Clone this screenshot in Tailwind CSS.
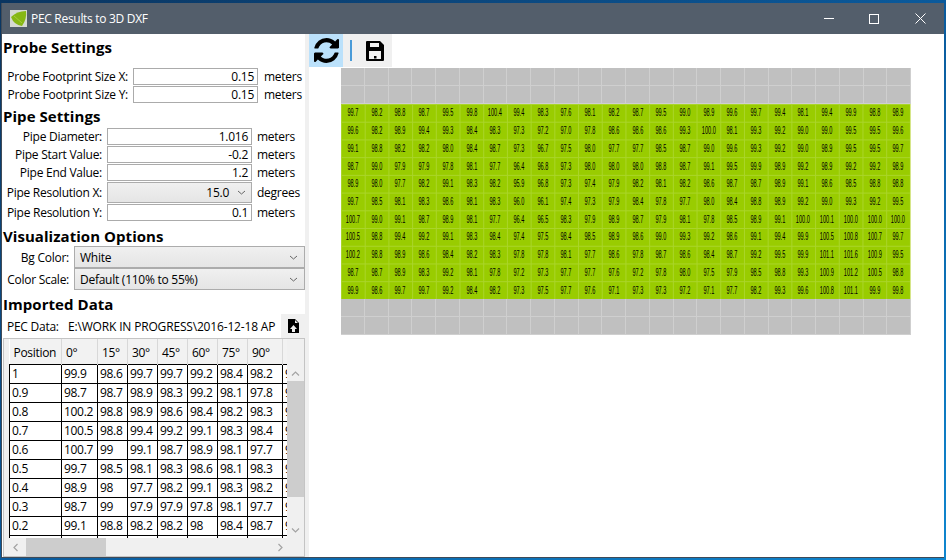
<!DOCTYPE html>
<html>
<head>
<meta charset="utf-8">
<title>PEC Results to 3D DXF</title>
<script src="https://cdn.jsdelivr.net/npm/@tailwindcss/browser@4"></script>
</head>
<body class="w-[946px] h-[560px] overflow-hidden bg-gradient-to-br from-[#0a3560] via-[#0a5a9c] to-[#0f86cf] font-['Open_Sans','Noto_Sans',sans-serif] text-[12px] text-black">
<div class="ml-[1px] mt-[3px] w-[943px] h-[555px] border-l border-b border-[#3f4a57] flex flex-col bg-white">
  <div class="h-[31px] shrink-0 bg-[#535e6b] flex items-center text-white">
    <svg class="ml-[8px] w-[17px] h-[17px]" viewBox="0 0 17 17"><rect width="17" height="17" fill="#d5d9d2"/><path d="M1 7 Q7 1 16 1 Q17 9 12 16 Q4 15 1 7Z" fill="#86b714"/><path d="M4 6 L12 13" stroke="#a5cf3a" stroke-width="1"/></svg>
    <span class="ml-[4px] tracking-[-0.3px]">PEC Results to 3D DXF</span>
    <div class="ml-auto flex items-center pr-px">
      <div class="w-[44px] h-[31px] flex items-center justify-center"><div class="w-[10px] h-px bg-white"></div></div>
      <div class="w-[46px] h-[31px] flex items-center justify-center"><div class="w-[10px] h-[10px] border border-white"></div></div>
      <div class="w-[46px] h-[31px] flex items-center justify-center"><svg class="w-[11px] h-[11px]" viewBox="0 0 11 11"><path d="M0.5 0.5 L10.5 10.5 M10.5 0.5 L0.5 10.5" stroke="#fff" stroke-width="1"/></svg></div>
    </div>
  </div>
  <div class="flex-1 flex min-h-0">
    <div class="w-[303px] shrink-0 flex flex-col tracking-[-0.26px]">
      <div class="h-[26px] pl-[1px] flex items-center font-bold text-[15px] tracking-[0.05px]">Probe Settings</div>
      <div class="mt-[8px] grid grid-cols-[131px_125px_1fr] auto-rows-[17px] gap-y-px items-center">
        <div class="text-right pr-[5px] pt-px">Probe Footprint Size X:</div>
        <div class="h-full border border-[#ababab] text-right pr-[3px] leading-[16px]">0.15</div>
        <div class="pl-[6px] pt-px">meters</div>
        <div class="text-right pr-[5px] pt-px">Probe Footprint Size Y:</div>
        <div class="h-full border border-[#ababab] text-right pr-[3px] leading-[16px]">0.15</div>
        <div class="pl-[6px] pt-px">meters</div>
      </div>
      <div class="h-[25px] pt-[2px] pl-[1px] flex items-center font-bold text-[15px] tracking-[0.05px]">Pipe Settings</div>
      <div class="grid grid-cols-[105px_145px_1fr] grid-rows-[17px_17px_17px_21px_17px] gap-y-px items-center">
        <div class="text-right pr-[5px] pt-px">Pipe Diameter:</div>
        <div class="h-full border border-[#ababab] text-right pr-[3px] leading-[16px]">1.016</div>
        <div class="pl-[5px] pt-px">meters</div>
        <div class="text-right pr-[5px] pt-px">Pipe Start Value:</div>
        <div class="h-full border border-[#ababab] text-right pr-[3px] leading-[16px]">-0.2</div>
        <div class="pl-[5px] pt-px">meters</div>
        <div class="text-right pr-[5px] pt-px">Pipe End Value:</div>
        <div class="h-full border border-[#ababab] text-right pr-[3px] leading-[16px]">1.2</div>
        <div class="pl-[5px] pt-px">meters</div>
        <div class="text-right pr-[5px] pt-px">Pipe Resolution X:</div>
        <div class="h-full border border-[#acacac] bg-gradient-to-b from-[#f0f0f0] to-[#e5e5e5] flex items-center justify-end pr-[5px]"><span>15.0</span>
          <svg class="ml-[8px] w-[9px] h-[5px]" viewBox="0 0 9 5"><path d="M1 1 L4.5 4 L8 1" fill="none" stroke="#666" stroke-width="1"/></svg>
        </div>
        <div class="pl-[5px] pt-px">degrees</div>
        <div class="text-right pr-[5px] pt-px">Pipe Resolution Y:</div>
        <div class="h-full border border-[#ababab] text-right pr-[3px] leading-[16px]">0.1</div>
        <div class="pl-[5px] pt-px">meters</div>
      </div>
      <div class="h-[25px] pt-[5px] pl-[1px] flex items-center font-bold text-[15px] tracking-[0.05px]">Visualization Options</div>
      <div class="grid grid-cols-[72px_1fr] grid-rows-[22px_22px] items-center">
        <div class="text-right pr-[5px] pt-px">Bg Color:</div>
        <div class="h-full border border-[#acacac] bg-gradient-to-b from-[#f0f0f0] to-[#e5e5e5] flex items-center justify-between pl-[5px] pr-[6px]"><span class="pt-px">White</span>
          <svg class="w-[9px] h-[5px]" viewBox="0 0 9 5"><path d="M1 1 L4.5 4 L8 1" fill="none" stroke="#666" stroke-width="1"/></svg>
        </div>
        <div class="text-right pr-[5px] pt-px">Color Scale:</div>
        <div class="h-full border border-[#acacac] bg-gradient-to-b from-[#f0f0f0] to-[#e5e5e5] flex items-center justify-between pl-[5px] pr-[6px]"><span class="pt-px">Default (110% to 55%)</span>
          <svg class="w-[9px] h-[5px]" viewBox="0 0 9 5"><path d="M1 1 L4.5 4 L8 1" fill="none" stroke="#666" stroke-width="1"/></svg>
        </div>
      </div>
      <div class="h-[24px] pt-[4px] pl-[1px] flex items-center font-bold text-[15px] tracking-[0.05px]">Imported Data</div>
      <div class="h-[24px] flex items-center pl-[5px]">
        <span class="w-[61px] shrink-0 pt-px">PEC Data:</span>
        <span class="w-[213px] overflow-hidden whitespace-nowrap shrink-0 pt-px tracking-[-0.17px]">E:\WORK IN PROGRESS\2016-12-18 AP</span>
        <div class="ml-auto w-[24px] h-[24px] bg-[#f0f0f0] flex items-center justify-center">
          <svg class="w-[11px] h-[14px]" viewBox="0 0 11 14"><path fill-rule="evenodd" d="M0 0 H7 L11 4 V14 H0 Z M7 1 V4 H10 Z M5.5 6 L2 10 H4 V13 H7 V10 H9 Z" fill="#000"/></svg>
        </div>
      </div>
      <div class="flex-1 min-h-0 ml-[1px] border border-[#c4c4c4] flex flex-col tracking-[-0.3px]">
        <div class="flex-1 min-h-0 flex">
          <div class="w-[5px] shrink-0 bg-[#f0f0f0]"></div>
          <div class="flex-1 min-w-0 overflow-hidden">
            <table class="table-fixed w-[308px] border-collapse [&_td]:border [&_td]:border-black [&_td]:h-[19px] [&_td]:p-0 [&_td]:pl-[2px] [&_td]:leading-[16px] [&_td]:whitespace-nowrap [&_td]:overflow-hidden [&_th]:h-[25px] [&_th]:pt-[3px] [&_th]:bg-[#f2f2f2] [&_th]:border-r [&_th]:border-[#d8d8d8] [&_th]:font-normal [&_th]:text-left [&_th]:pl-[4px]">
              <colgroup><col class="w-[52px]"><col class="w-[36px]"><col class="w-[30px]"><col class="w-[30px]"><col class="w-[30px]"><col class="w-[30px]"><col class="w-[30px]"><col class="w-[35px]"><col class="w-[35px]"></colgroup>
              <tr><th>Position</th><th>0°</th><th>15°</th><th>30°</th><th>45°</th><th>60°</th><th>75°</th><th>90°</th><th>105°</th></tr>
              <tr><td>1</td><td>99.9</td><td>98.6</td><td>99.7</td><td>99.7</td><td>99.2</td><td>98.4</td><td>98.2</td><td>97.3</td></tr>
              <tr><td>0.9</td><td>98.7</td><td>98.7</td><td>98.9</td><td>98.3</td><td>99.2</td><td>98.1</td><td>97.8</td><td>97.2</td></tr>
              <tr><td>0.8</td><td>100.2</td><td>98.8</td><td>98.9</td><td>98.6</td><td>98.4</td><td>98.2</td><td>98.3</td><td>97.8</td></tr>
              <tr><td>0.7</td><td>100.5</td><td>98.8</td><td>99.4</td><td>99.2</td><td>99.1</td><td>98.3</td><td>98.4</td><td>97.4</td></tr>
              <tr><td>0.6</td><td>100.7</td><td>99</td><td>99.1</td><td>98.7</td><td>98.9</td><td>98.1</td><td>97.7</td><td>96.4</td></tr>
              <tr><td>0.5</td><td>99.7</td><td>98.5</td><td>98.1</td><td>98.3</td><td>98.6</td><td>98.1</td><td>98.3</td><td>96.0</td></tr>
              <tr><td>0.4</td><td>98.9</td><td>98</td><td>97.7</td><td>98.2</td><td>99.1</td><td>98.3</td><td>98.2</td><td>95.9</td></tr>
              <tr><td>0.3</td><td>98.7</td><td>99</td><td>97.9</td><td>97.9</td><td>97.8</td><td>98.1</td><td>97.7</td><td>96.4</td></tr>
              <tr><td>0.2</td><td>99.1</td><td>98.8</td><td>98.2</td><td>98.2</td><td>98</td><td>98.4</td><td>98.7</td><td>97.3</td></tr>
              <tr><td></td><td></td><td></td><td></td><td></td><td></td><td></td><td></td><td></td></tr>
            </table>
          </div>
          <div class="w-[17px] shrink-0 bg-[#f0f0f0] flex flex-col">
            <div class="h-[42px] flex items-end justify-center pb-[5px]"><svg class="w-[9px] h-[5px]" viewBox="0 0 9 5"><path d="M1 4.5 L4.5 1 L8 4.5" fill="none" stroke="#a3a3a3" stroke-width="1.2"/></svg></div>
            <div class="h-[116px] bg-[#cdcdcd]"></div>
            <div class="flex-1 flex items-end justify-center pb-[5px]"><svg class="w-[9px] h-[5px]" viewBox="0 0 9 5"><path d="M1 0.5 L4.5 4 L8 0.5" fill="none" stroke="#a3a3a3" stroke-width="1.2"/></svg></div>
          </div>
        </div>
        <div class="h-[18px] shrink-0 bg-[#f0f0f0] flex items-center">
          <div class="w-[22px] flex justify-center"><svg class="w-[5px] h-[9px]" viewBox="0 0 5 9"><path d="M4.5 1 L1 4.5 L4.5 8" fill="none" stroke="#a3a3a3" stroke-width="1.2"/></svg></div>
          <div class="w-[80px] h-full bg-[#cdcdcd]"></div>
          <div class="flex-1 flex justify-end pr-[21px]"><svg class="w-[5px] h-[9px]" viewBox="0 0 5 9"><path d="M0.5 1 L4 4.5 L0.5 8" fill="none" stroke="#a3a3a3" stroke-width="1.2"/></svg></div>
        </div>
      </div>
    </div>
    <div class="w-[4px] shrink-0 bg-[#f0f0f0]"></div>
    <div class="flex-1 min-w-0 flex flex-col">
      <div class="h-[34px] shrink-0 flex">
        <div class="w-[34px] h-[33px] bg-[#bbe1fb] flex items-center justify-center">
          <svg class="w-[25px] h-[25px]" viewBox="128 128 1536 1536"><path d="M1639 1056q0 5-1 7-64 268-268 434.5t-478 166.5q-146 0-282.5-55t-243.5-157l-129 129q-19 19-45 19t-45-19-19-45v-448q0-26 19-45t45-19h448q26 0 45 19t19 45-19 45l-137 137q71 66 161 102t187 36q134 0 250-65t186-179q11-17 53-117 8-23 30-23h192q13 0 22.5 9.5t9.5 22.5zm25-800v448q0 26-19 45t-45 19h-448q-26 0-45-19t-19-45 19-45l138-138q-148-137-349-137-134 0-250 65t-186 179q-11 17-53 117-8 23-30 23h-199q-13 0-22.5-9.5t-9.5-22.5v-7q65-268 270-434.5t480-166.5q146 0 284 55.5t245 156.5l130-129q19-19 45-19t45 19 19 45z" fill="#000"/></svg>
        </div>
        <div class="w-[49px] h-[33px] bg-[#f0f0f0] flex items-center">
          <div class="ml-[7px] w-[2px] h-[21px] bg-[#4a9bd8]"></div>
          <svg class="ml-[14px] w-[18px] h-[20px]" viewBox="0 0 18 20"><path fill-rule="evenodd" d="M0 1 Q0 0 1 0 H14 L18 4 V19 Q18 20 17 20 H1 Q0 20 0 19 Z M4 2 V6 H13 V2 Z M3 10 V18 H15 V10 Z" fill="#000"/><rect x="8" y="15" width="2.5" height="2.5" fill="#000"/></svg>
        </div>
      </div>
      <div class="ml-[32px] w-[570px] text-[10px] text-center text-black font-['Liberation_Sans',sans-serif]">
        <div class="h-[36px] grid grid-cols-24 grid-rows-2 gap-px bg-[#cfcfcf] pr-px pb-px *:bg-[#c0c0c0]">
          <div></div><div></div><div></div><div></div><div></div><div></div><div></div><div></div><div></div><div></div><div></div><div></div><div></div><div></div><div></div><div></div><div></div><div></div><div></div><div></div><div></div><div></div><div></div><div></div>
          <div></div><div></div><div></div><div></div><div></div><div></div><div></div><div></div><div></div><div></div><div></div><div></div><div></div><div></div><div></div><div></div><div></div><div></div><div></div><div></div><div></div><div></div><div></div><div></div>
        </div>
        <div class="h-[195px] grid grid-cols-24 grid-rows-11 bg-[#99cc00] bg-[linear-gradient(90deg,#aad52a_1px,transparent_1px),linear-gradient(180deg,#aad52a_1px,transparent_1px)] bg-[length:23.708px_17.727px] border-r border-[#d6e68a] *:flex *:items-center *:justify-center *:scale-x-[0.56]">
          <div>99.7</div><div>98.2</div><div>98.8</div><div>98.7</div><div>99.5</div><div>99.8</div><div>100.4</div><div>99.4</div><div>98.3</div><div>97.6</div><div>98.1</div><div>98.2</div><div>98.7</div><div>99.5</div><div>99.0</div><div>98.9</div><div>99.6</div><div>99.7</div><div>99.4</div><div>98.1</div><div>99.4</div><div>99.9</div><div>98.8</div><div>98.9</div>
          <div>99.6</div><div>98.2</div><div>98.9</div><div>99.4</div><div>99.3</div><div>98.4</div><div>98.3</div><div>97.3</div><div>97.2</div><div>97.0</div><div>97.8</div><div>98.6</div><div>98.6</div><div>98.6</div><div>99.3</div><div>100.0</div><div>98.1</div><div>99.3</div><div>99.2</div><div>99.0</div><div>99.0</div><div>99.5</div><div>99.5</div><div>99.6</div>
          <div>99.1</div><div>98.8</div><div>98.2</div><div>98.2</div><div>98.0</div><div>98.4</div><div>98.7</div><div>97.3</div><div>96.7</div><div>97.5</div><div>98.0</div><div>97.7</div><div>97.7</div><div>98.5</div><div>98.7</div><div>99.0</div><div>99.6</div><div>99.3</div><div>99.2</div><div>99.0</div><div>98.9</div><div>99.5</div><div>99.5</div><div>99.7</div>
          <div>98.7</div><div>99.0</div><div>97.9</div><div>97.9</div><div>97.8</div><div>98.1</div><div>97.7</div><div>96.4</div><div>96.8</div><div>97.3</div><div>98.0</div><div>98.0</div><div>98.0</div><div>98.8</div><div>98.7</div><div>99.1</div><div>99.5</div><div>99.9</div><div>98.9</div><div>99.2</div><div>98.9</div><div>99.2</div><div>99.2</div><div>98.9</div>
          <div>98.9</div><div>98.0</div><div>97.7</div><div>98.2</div><div>99.1</div><div>98.3</div><div>98.2</div><div>95.9</div><div>96.8</div><div>97.3</div><div>97.4</div><div>97.9</div><div>98.2</div><div>98.1</div><div>98.2</div><div>98.6</div><div>98.7</div><div>98.7</div><div>98.9</div><div>99.1</div><div>98.6</div><div>98.5</div><div>98.8</div><div>98.8</div>
          <div>99.7</div><div>98.5</div><div>98.1</div><div>98.3</div><div>98.6</div><div>98.1</div><div>98.3</div><div>96.0</div><div>96.1</div><div>97.4</div><div>97.3</div><div>97.9</div><div>98.4</div><div>97.8</div><div>97.7</div><div>98.0</div><div>98.4</div><div>98.8</div><div>98.9</div><div>99.2</div><div>99.0</div><div>99.3</div><div>99.2</div><div>99.5</div>
          <div>100.7</div><div>99.0</div><div>99.1</div><div>98.7</div><div>98.9</div><div>98.1</div><div>97.7</div><div>96.4</div><div>96.5</div><div>98.3</div><div>97.9</div><div>98.9</div><div>98.7</div><div>97.9</div><div>98.1</div><div>97.8</div><div>98.5</div><div>98.9</div><div>99.1</div><div>100.0</div><div>100.1</div><div>100.0</div><div>100.0</div><div>100.0</div>
          <div>100.5</div><div>98.8</div><div>99.4</div><div>99.2</div><div>99.1</div><div>98.3</div><div>98.4</div><div>97.4</div><div>97.5</div><div>98.4</div><div>98.5</div><div>98.9</div><div>98.6</div><div>99.0</div><div>99.3</div><div>99.2</div><div>98.6</div><div>99.1</div><div>99.4</div><div>99.9</div><div>100.5</div><div>100.8</div><div>100.7</div><div>99.7</div>
          <div>100.2</div><div>98.8</div><div>98.9</div><div>98.6</div><div>98.4</div><div>98.2</div><div>98.3</div><div>97.8</div><div>97.8</div><div>98.1</div><div>97.7</div><div>98.6</div><div>97.8</div><div>98.7</div><div>98.6</div><div>98.4</div><div>98.7</div><div>99.2</div><div>99.5</div><div>99.9</div><div>101.1</div><div>101.6</div><div>100.9</div><div>99.5</div>
          <div>98.7</div><div>98.7</div><div>98.9</div><div>98.3</div><div>99.2</div><div>98.1</div><div>97.8</div><div>97.2</div><div>97.3</div><div>97.7</div><div>97.7</div><div>97.6</div><div>97.2</div><div>97.8</div><div>98.0</div><div>97.5</div><div>97.9</div><div>98.5</div><div>98.8</div><div>99.3</div><div>100.9</div><div>101.2</div><div>100.5</div><div>98.8</div>
          <div>99.9</div><div>98.6</div><div>99.7</div><div>99.7</div><div>99.2</div><div>98.4</div><div>98.2</div><div>97.3</div><div>97.5</div><div>97.7</div><div>97.6</div><div>97.1</div><div>97.3</div><div>97.3</div><div>97.2</div><div>97.1</div><div>97.7</div><div>98.2</div><div>99.3</div><div>99.6</div><div>100.8</div><div>101.1</div><div>99.9</div><div>99.8</div>
        </div>
        <div class="h-[36px] grid grid-cols-24 grid-rows-2 gap-px bg-[#cfcfcf] pr-px pb-px *:bg-[#c0c0c0]">
          <div></div><div></div><div></div><div></div><div></div><div></div><div></div><div></div><div></div><div></div><div></div><div></div><div></div><div></div><div></div><div></div><div></div><div></div><div></div><div></div><div></div><div></div><div></div><div></div>
          <div></div><div></div><div></div><div></div><div></div><div></div><div></div><div></div><div></div><div></div><div></div><div></div><div></div><div></div><div></div><div></div><div></div><div></div><div></div><div></div><div></div><div></div><div></div><div></div>
        </div>
      </div>
    </div>
  </div>
</div>
</body>
</html>
